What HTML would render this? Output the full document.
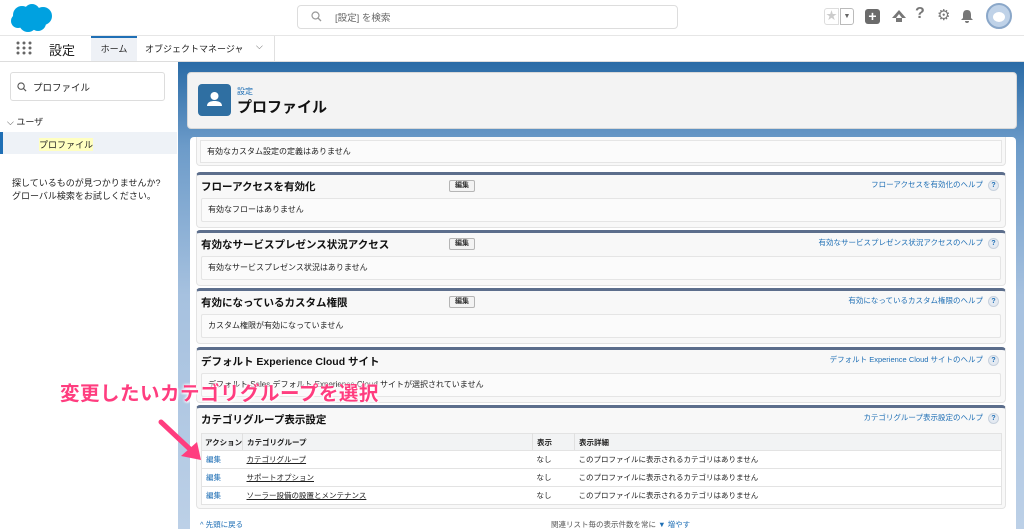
<!DOCTYPE html>
<html><head><meta charset="utf-8"><style>
*{box-sizing:border-box;margin:0;padding:0}
body{width:1024px;height:529px;overflow:hidden;position:relative;background:#fff;font-family:"Liberation Sans","Noto Sans CJK JP",sans-serif;color:#222}
.a{position:absolute}
.sec{position:absolute;left:196px;width:810px;background:#f8f8f8;border:1px solid #e3e3e3;border-top:3px solid #5c6e8c;border-radius:4px}
.sec .t{position:absolute;left:4px;top:4px;font-size:10.5px;font-weight:bold;color:#111}
.sec .btn{position:absolute;left:252px;top:5px;width:26px;height:12px;border:1px solid #b5b5b5;border-radius:2px;background:#f3f3f3;font-size:7px;text-align:center;line-height:10px;font-weight:bold;color:#333}
.sec .h{position:absolute;right:6px;top:4px;font-size:7.5px;color:#1f6fb5}
.q{display:inline-block;width:11px;height:11px;border-radius:50%;background:#e4eaf2;border:1px solid #c7d1dd;color:#1f6fb5;font-size:7px;text-align:center;line-height:9px;font-weight:bold;margin-left:5px;vertical-align:middle}
.sec .in{position:absolute;left:4px;right:4px;top:23px;height:24px;background:#fbfbfb;border:1px solid #e5e5e5;border-radius:2px;font-size:8px;line-height:22px;padding-left:6px;color:#222}
td,th{font-size:7.5px;text-align:left;height:18px;border-bottom:1px solid #e3e3e3;padding-left:4px;white-space:nowrap}
th{font-weight:bold;background:#f2f3f4;border-right:1px solid #e0e0e0;height:17px}
td a{color:#222;text-decoration:underline}
td.e{color:#1f6fb5}
</style></head><body>
<svg class="a" style="left:10px;top:3px" width="44" height="30" viewBox="0 0 44 30"><g fill="#00a1e0"><circle cx="12" cy="12" r="9"/><circle cx="22" cy="9" r="8"/><circle cx="33" cy="13" r="9"/><circle cx="18" cy="20" r="9"/><circle cx="28" cy="20" r="8"/><circle cx="8" cy="18" r="7"/></g></svg>
<div class="a" style="left:297px;top:5px;width:381px;height:24px;border:1px solid #ddd;border-radius:4px"></div>
<svg class="a" style="left:311px;top:11px" width="11" height="11" viewBox="0 0 11 11"><circle cx="4.5" cy="4.5" r="3.5" fill="none" stroke="#999" stroke-width="1.2"/><path d="M7 7l3 3" stroke="#999" stroke-width="1.3"/></svg>
<div class="a" style="left:335px;top:10px;font-size:9.5px;color:#666">[設定] を検索</div>
<div class="a" style="left:824px;top:8px;width:15px;height:17px;border:1px solid #ddd;border-radius:3px 0 0 3px;color:#ccc;font-size:11px;text-align:center;line-height:15px">★</div>
<div class="a" style="left:840px;top:8px;width:14px;height:17px;border:1px solid #bbb;border-radius:0 3px 3px 0;color:#666;font-size:7px;text-align:center;line-height:15px">▼</div>
<div class="a" style="left:865px;top:9px;width:15px;height:15px;border-radius:3px;background:#6b6b6b;color:#fff;font-size:14px;font-weight:bold;text-align:center;line-height:15px">+</div>
<svg class="a" style="left:891px;top:9px" width="16" height="16" viewBox="0 0 16 16"><path d="M8 1L1 9h4v4h6V9h4z" fill="#777"/><path d="M8 5l-3 4h6z" fill="#fff"/></svg>
<div class="a" style="left:915px;top:5px;font-size:16px;color:#777;font-weight:bold">?</div>
<div class="a" style="left:937px;top:6px;font-size:15px;color:#777">⚙</div>
<svg class="a" style="left:960px;top:9px" width="14" height="15" viewBox="0 0 14 15"><path d="M7 1c-3 0-4 2-4 5v3l-2 2h12l-2-2V6c0-3-1-5-4-5z M5 12a2 2 0 0 0 4 0z" fill="#777"/></svg>
<div class="a" style="left:986px;top:3px;width:26px;height:26px;border-radius:50%;background:#bfd2e8;border:2px solid #8aa7c9"><div class="a" style="left:5px;top:7px;width:12px;height:10px;border-radius:50%;background:#fff"></div></div>
<div class="a" style="left:0;top:35px;width:1024px;height:27px;border-top:1px solid #e6e6e6;border-bottom:1px solid #ddd"></div>
<svg class="a" style="left:16px;top:41px" width="16" height="14" viewBox="0 0 16 14"><g fill="#666"><circle cx="2" cy="2" r="1.5"/><circle cx="8" cy="2" r="1.5"/><circle cx="14" cy="2" r="1.5"/><circle cx="2" cy="7" r="1.5"/><circle cx="8" cy="7" r="1.5"/><circle cx="14" cy="7" r="1.5"/><circle cx="2" cy="12" r="1.5"/><circle cx="8" cy="12" r="1.5"/><circle cx="14" cy="12" r="1.5"/></g></svg>
<div class="a" style="left:49px;top:40px;font-size:13px;color:#222">設定</div>
<div class="a" style="left:91px;top:36px;width:46px;height:25px;background:#eef1f6;border-top:2px solid #1f6fb5;font-size:9px;text-align:center;line-height:22px">ホーム</div>
<div class="a" style="left:145px;top:42px;font-size:9px">オブジェクトマネージャ</div>
<div class="a" style="left:256px;top:41px;font-size:9px;color:#555">⌵</div>
<div class="a" style="left:274px;top:36px;width:1px;height:25px;background:#e0e0e0"></div>
<div class="a" style="left:0;top:62px;width:178px;height:467px;background:#fff"></div>
<div class="a" style="left:10px;top:72px;width:155px;height:29px;border:1px solid #ddd;border-radius:3px"></div>
<svg class="a" style="left:17px;top:82px" width="10" height="10" viewBox="0 0 11 11"><circle cx="4.5" cy="4.5" r="3.5" fill="none" stroke="#555" stroke-width="1.2"/><path d="M7 7l3 3" stroke="#555" stroke-width="1.3"/></svg>
<div class="a" style="left:33px;top:80px;font-size:9.5px">プロファイル</div>
<div class="a" style="left:7px;top:115px;font-size:9px;color:#444">⌵ <span style="color:#222">ユーザ</span></div>
<div class="a" style="left:0;top:132px;width:177px;height:22px;background:#eef2f7;border-left:3px solid #1f6fb5"></div>
<div class="a" style="left:39px;top:138px;font-size:9px;background:#ffffc0">プロファイル</div>
<div class="a" style="left:12px;top:177px;font-size:9px;line-height:13px">探しているものが見つかりませんか?<br>グローバル検索をお試しください。</div>
<div class="a" style="left:178px;top:62px;width:846px;height:467px;background:linear-gradient(180deg,#2a6ba6 0%,#6c9bc9 18%,#a6c1df 50%,#bcd0e7 100%)"></div>
<div class="a" style="left:187px;top:72px;width:830px;height:57px;background:#f3f3f3;border-radius:4px;border:1px solid #d8d8d8"></div>
<div class="a" style="left:198px;top:84px;width:33px;height:32px;border-radius:4px;background:#2f6fa2"><svg width="33" height="32" viewBox="0 0 33 32"><circle cx="16.5" cy="12" r="4" fill="#fff"/><path d="M9 22c0-4 4-5 7.5-5s7.5 1 7.5 5z" fill="#fff"/></svg></div>
<div class="a" style="left:237px;top:86px;font-size:8px;color:#1f6fb5">設定</div>
<div class="a" style="left:237px;top:96px;font-size:15px;font-weight:bold;color:#111">プロファイル</div>
<div class="a" style="left:190px;top:137px;width:826px;height:392px;background:#fff;border-radius:4px 4px 0 0"></div>
<div class="a" style="left:196px;top:137px;width:810px;height:29px;background:#f8f8f8;border:1px solid #e3e3e3;border-top:none;border-radius:0 0 4px 4px"></div>
<div class="a" style="left:200px;top:140px;width:802px;height:23px;background:#fbfbfb;border:1px solid #e5e5e5;font-size:8px;line-height:21px;padding-left:6px">有効なカスタム設定の定義はありません</div>

<div class="sec" style="top:172px;height:56px"><div class="t">フローアクセスを有効化</div><div class="btn">編集</div><div class="h">フローアクセスを有効化のヘルプ<span class="q">?</span></div><div class="in">有効なフローはありません</div></div>
<div class="sec" style="top:230px;height:56px"><div class="t">有効なサービスプレゼンス状況アクセス</div><div class="btn">編集</div><div class="h">有効なサービスプレゼンス状況アクセスのヘルプ<span class="q">?</span></div><div class="in">有効なサービスプレゼンス状況はありません</div></div>
<div class="sec" style="top:288px;height:56px"><div class="t">有効になっているカスタム権限</div><div class="btn">編集</div><div class="h">有効になっているカスタム権限のヘルプ<span class="q">?</span></div><div class="in">カスタム権限が有効になっていません</div></div>
<div class="sec" style="top:347px;height:56px"><div class="t">デフォルト Experience Cloud サイト</div><div class="h">デフォルト Experience Cloud サイトのヘルプ<span class="q">?</span></div><div class="in">デフォルト Sales デフォルト Experience Cloud サイトが選択されていません</div></div>
<div class="sec" style="top:405px;height:104px"><div class="t">カテゴリグループ表示設定</div><div class="h">カテゴリグループ表示設定のヘルプ<span class="q">?</span></div>
<table class="a" style="left:4px;top:25px;width:801px;border-collapse:collapse;background:#fff;border:1px solid #e3e3e3;table-layout:fixed">
<colgroup><col style="width:41px"><col style="width:290px"><col style="width:42px"><col></colgroup>
<tr><th style="padding-left:3px">アクション</th><th>カテゴリグループ</th><th>表示</th><th style="border-right:none">表示詳細</th></tr>
<tr><td class="e">編集</td><td><a>カテゴリグループ</a></td><td>なし</td><td>このプロファイルに表示されるカテゴリはありません</td></tr>
<tr><td class="e">編集</td><td><a>サポートオプション</a></td><td>なし</td><td>このプロファイルに表示されるカテゴリはありません</td></tr>
<tr><td class="e">編集</td><td><a>ソーラー設備の設置とメンテナンス</a></td><td>なし</td><td>このプロファイルに表示されるカテゴリはありません</td></tr>
</table></div>
<div class="a" style="left:200px;top:519px;font-size:7.5px;color:#1f6fb5">^ 先頭に戻る</div>
<div class="a" style="left:551px;top:519px;font-size:7.5px;color:#555">関連リスト毎の表示件数を常に <span style="color:#1f6fb5">▼ 増やす</span></div>
<div class="a" style="left:60px;top:377px;font-size:19.5px;font-weight:bold;color:#ff3d7f;letter-spacing:0.5px;text-shadow:0 0 3px #fff,0 0 3px #fff,1px 1px 2px #fff;white-space:nowrap">変更したいカテゴリグループを選択</div>
<svg class="a" style="left:155px;top:418px" width="50" height="45" viewBox="0 0 50 45"><path d="M6 4L38 34" stroke="#ff3d7f" stroke-width="5" stroke-linecap="round"/><path d="M46 42L26 38L42 24z" fill="#ff3d7f"/></svg>
</body></html>
